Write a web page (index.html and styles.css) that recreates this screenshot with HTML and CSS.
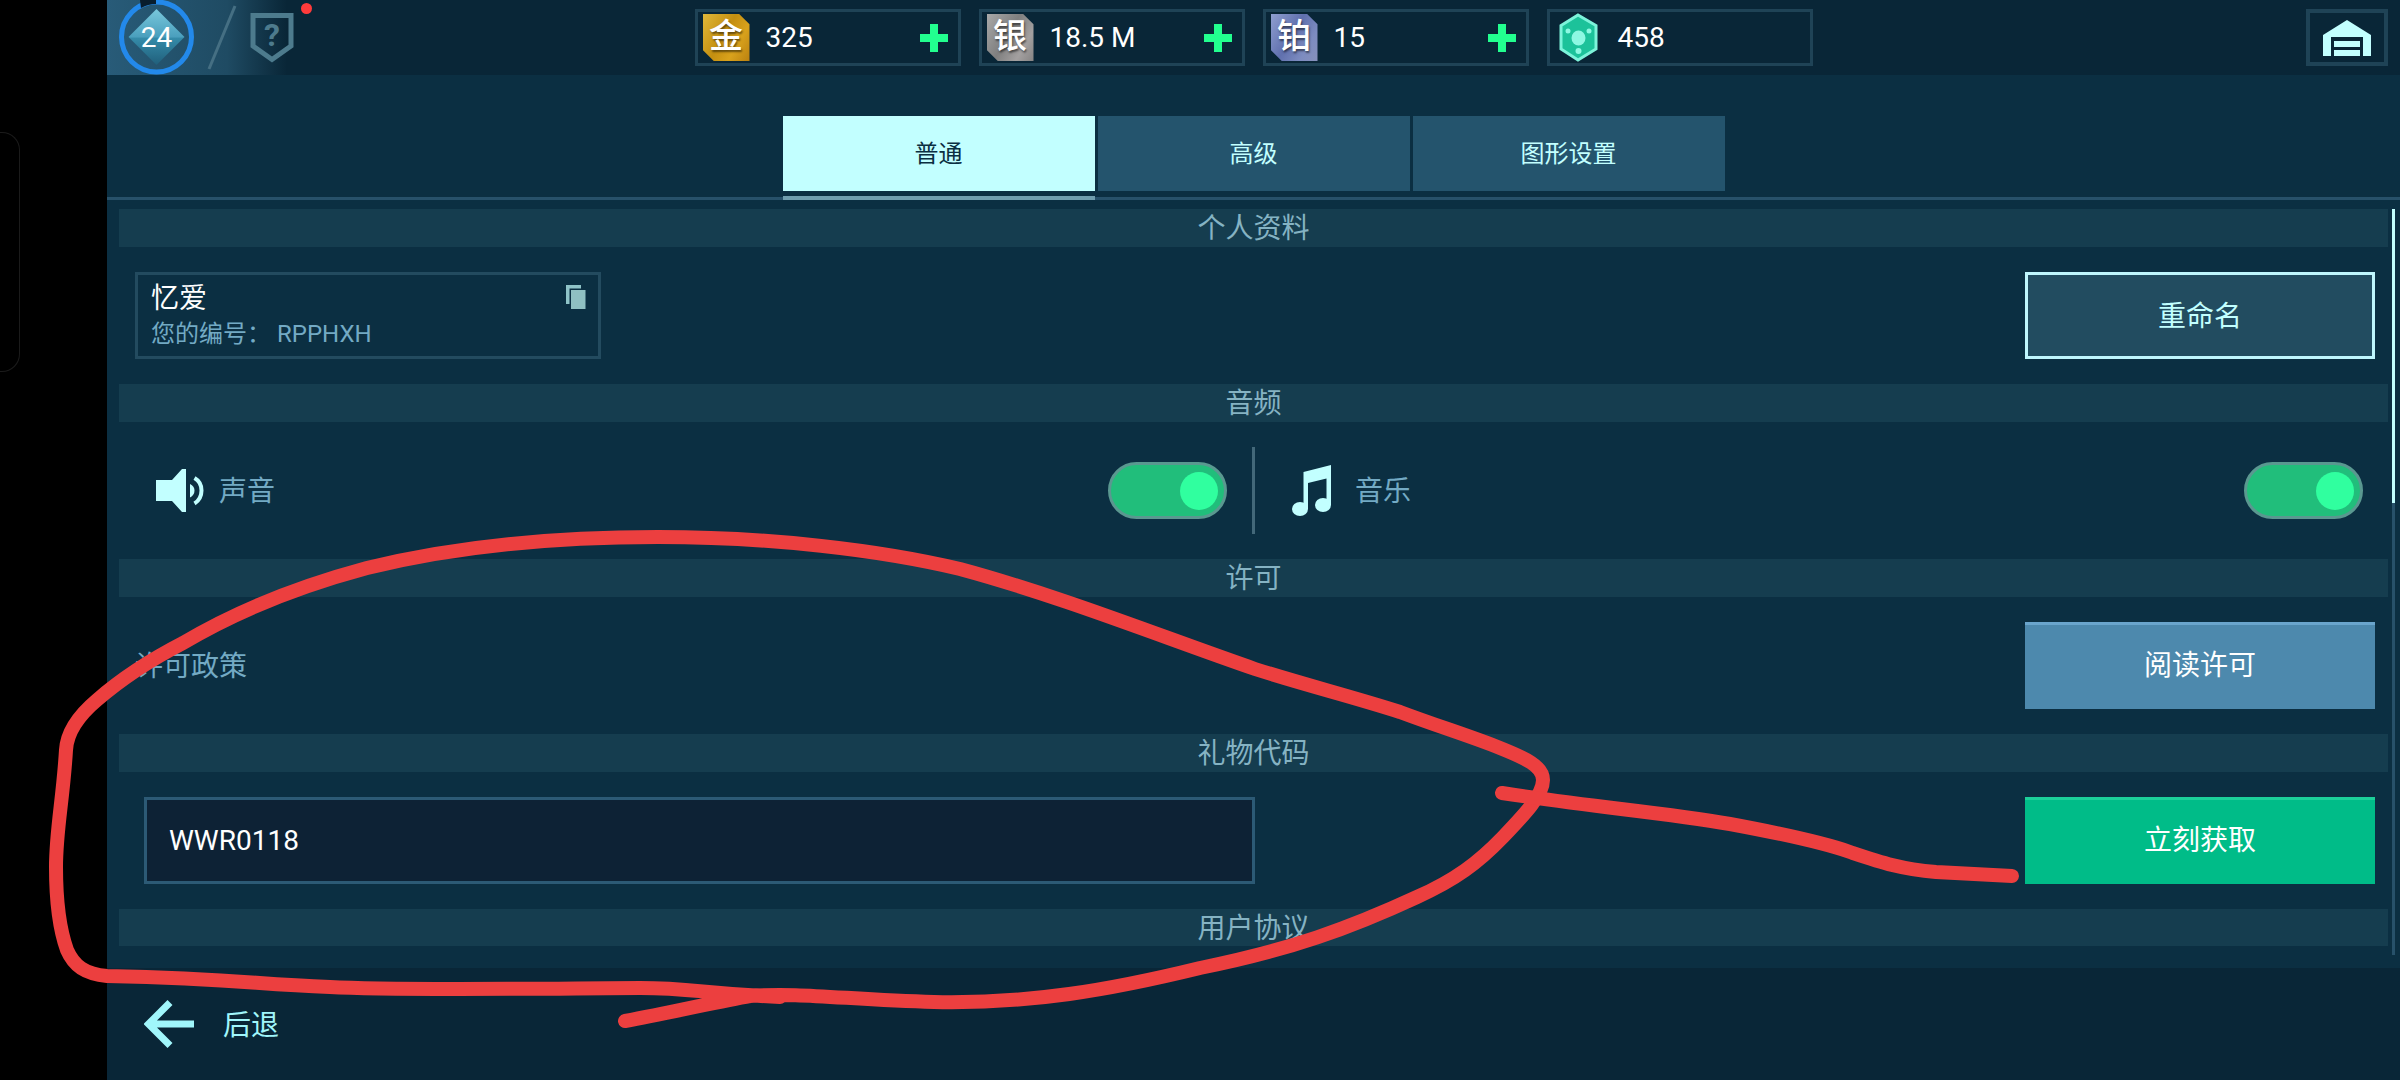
FILE: index.html
```html
<!DOCTYPE html>
<html lang="zh-CN">
<head>
<meta charset="utf-8">
<title>设置</title>
<meta name="viewport" content="width=device-width, initial-scale=1">
<link rel="stylesheet" href="styles.css">
</head>
<body>
<div class="screen">
  <aside class="bezel"><div class="bezel-outline"></div></aside>
  <div class="app">
    <header class="topbar">
      <div class="player">
        <div class="level">
          <svg viewBox="0 0 75 75" width="75" height="75" aria-hidden="true">
            <defs>
              <linearGradient id="gem" x1="0" y1="0" x2="0" y2="1">
                <stop offset="0" stop-color="#79c8dc"/>
                <stop offset="0.5" stop-color="#4a9fbd"/>
                <stop offset="0.52" stop-color="#358ba9"/>
                <stop offset="1" stop-color="#205f7b"/>
              </linearGradient>
            </defs>
            <path d="M37.500 9L65.500 37L37.500 65L9.500 37Z" fill="url(#gem)"/>
            <circle cx="37.500" cy="37" r="35" fill="none" stroke="#2389ea" stroke-width="5"/>
            <path d="M21 0H37V4Q29 4 22 8Z" fill="#081d2d"/>
          </svg>
          <span class="level-number">24</span>
        </div>
        <svg class="slash" viewBox="0 0 32 75" width="32" height="75" aria-hidden="true"><path d="M3 69L29 6" stroke="#456f83" stroke-width="3"/></svg>
        <div class="rank">
          <svg viewBox="0 0 44 50" width="44" height="50" aria-hidden="true"><path d="M3 2.500H41V33L22 46.500L3 33Z" fill="none" stroke="#4d7b8d" stroke-width="5"/></svg>
          <span class="rank-mark">?</span>
          <i class="dot"></i>
        </div>
      </div>
      <div class="wallet">
        <div class="coin"><span class="chip gold">金</span><span class="amount">325</span><button class="plus" type="button" aria-label="购买金币"></button></div>
        <div class="coin"><span class="chip silver">银</span><span class="amount">18.5 M</span><button class="plus" type="button" aria-label="购买银币"></button></div>
        <div class="coin"><span class="chip platinum">铂</span><span class="amount">15</span><button class="plus" type="button" aria-label="购买铂金"></button></div>
        <div class="coin">
          <svg class="key-gem" viewBox="0 0 47 52" width="47" height="52" aria-hidden="true">
            <path d="M23 3L41 13.500V37L23 48L6 37V13.500Z" fill="#1cc29a" stroke="#7df3da" stroke-width="3"/>
            <ellipse cx="23.500" cy="26" rx="7" ry="7.500" fill="#8df8e2"/>
            <circle cx="13" cy="19" r="2.500" fill="#8df8e2"/><circle cx="34" cy="19" r="2.500" fill="#8df8e2"/><circle cx="23.500" cy="39" r="3" fill="#8df8e2"/>
          </svg>
          <span class="amount">458</span>
        </div>
      </div>
      <button class="home" type="button" aria-label="机库">
        <svg viewBox="0 0 48 36" width="48" height="36" aria-hidden="true"><path fill="#c2ffff" d="M24 0L48 15V36H40V17H8V36H0V15ZM11 21H37V27H11ZM11 30H37V36H11Z"/></svg>
      </button>
    </header>

    <nav class="tabs">
      <button class="tab active" type="button">普通</button>
      <button class="tab" type="button">高级</button>
      <button class="tab" type="button">图形设置</button>
    </nav>

    <main class="panel">
      <div class="list">
        <h2 class="heading">个人资料</h2>
        <section class="row">
          <div class="profile">
            <div class="profile-text">
              <span class="name">忆爱</span>
              <span class="id"><span>您的编号：</span><span>RPPHXH</span></span>
            </div>
            <button class="copy" type="button" aria-label="复制编号">
              <svg viewBox="0 0 20 24" width="20" height="24" aria-hidden="true"><path fill="#8fc4c8" d="M0 0H15V3.500H3.500V19H0Z"/><path fill="#8fc0c2" d="M5 5H19.500V24H5Z"/></svg>
            </button>
          </div>
          <button class="action outline" type="button">重命名</button>
        </section>

        <h2 class="heading">音频</h2>
        <section class="row audio">
          <div class="switch-row">
            <label class="switch-label" for="sound">
              <span class="glyph"><svg viewBox="0 0 48 44" width="48" height="44" aria-hidden="true"><path fill="#c2ffff" d="M0 11H16L26 0H30V43H26L16 32H0ZM34 15Q38.500 17 38.500 21.500T34 28.500Z"/><path d="M38.500 9Q45.500 13 45.500 21.500T38.500 34.500" fill="none" stroke="#c2ffff" stroke-width="4"/></svg></span>
              <span class="label-text">声音</span>
            </label>
            <input class="toggle" id="sound" type="checkbox" checked>
          </div>
          <div class="switch-row">
            <label class="switch-label" for="music">
              <span class="glyph"><svg viewBox="0 0 40 52" width="40" height="52" aria-hidden="true"><g fill="#c2ffff"><path d="M11.500 7L39 0V40H34.500V13.500L16 18V44H11.500Z"/><ellipse cx="8" cy="44" rx="8" ry="7"/><ellipse cx="31" cy="40" rx="8" ry="7"/></g></svg></span>
              <span class="label-text">音乐</span>
            </label>
            <input class="toggle" id="music" type="checkbox" checked>
          </div>
        </section>

        <h2 class="heading">许可</h2>
        <section class="row">
          <span class="label-text">许可政策</span>
          <button class="action blue" type="button">阅读许可</button>
        </section>

        <h2 class="heading"><label for="code">礼物代码</label></h2>
        <section class="row gift">
          <input class="code" id="code" type="text" value="WWR0118">
          <button class="action green" type="button">立刻获取</button>
        </section>

        <h2 class="heading">用户协议</h2>
      </div>
      <div class="track"><div class="thumb"></div></div>
    </main>

    <footer class="bottom">
      <button class="back" type="button">
        <svg viewBox="0 0 50 48" width="50" height="48" aria-hidden="true"><path d="M50 24H5M26 2.500L4.500 24L26 45.500" fill="none" stroke="#a0f6fb" stroke-width="7"/></svg>
        <span class="back-text">后退</span>
      </button>
    </footer>
  </div>

  <!-- Hand-drawn marker strokes over the whole screen -->
  <svg class="marker" viewBox="0 0 2400 1080" aria-hidden="true">
    <path d="M780 997C700 993 690 988 640 988C580 988 400 991 330 987C250 984 240 979 107 976C85 974 74 966 67 950C58 925 56 890 56 867C56 830 63 800 66 750C67 733 78 716 97 700C120 680 150 660 183 643C235 612 300 586 367 568C460 545 560 537 658 537C770 537 880 550 960 569C1060 596 1165 638 1255 669C1305 685 1350 696 1400 712C1440 727 1470 736 1500 748C1525 758 1543 766 1543 780C1543 795 1525 814 1503 837C1478 863 1455 880 1417 897C1350 928 1290 950 1200 968C1110 990 1030 1004 934 1002C850 1000 800 992 750 996C720 1001 670 1013 625 1021"/>
    <path d="M1502 793C1600 808 1660 812 1730 824C1800 837 1830 845 1850 852C1880 862 1900 869 1936 872L2012 876"/>
  </svg>
</div>
</body>
</html>
```
FILE: styles.css
```css
* { box-sizing: border-box; }

body {
  margin: 0;
  background: #000;
  font-family: Roboto, "Noto Sans CJK SC", sans-serif;
  font-size: 28px;
  color: #fff;
}

button, input {
  margin: 0;
  padding: 0;
  border: 0;
  border-radius: 0;
  background: none;
  color: inherit;
  font: inherit;
}

svg { display: block; }

.screen {
  position: relative;
  display: grid;
  grid-template-columns: 107px 1fr;
  height: 100vh;
  overflow: hidden;
}

.bezel { padding-top: 132px; }

.bezel-outline {
  width: 20px;
  height: 240px;
  border: 1px solid #1b1b1b;
  border-left: 0;
  border-radius: 0 18px 18px 0;
}

.app {
  display: flex;
  flex-direction: column;
  min-width: 0;
  min-height: 0;
  background: #0b2f42;
}

/* Top bar */
.topbar {
  display: grid;
  grid-template-columns: 1fr auto 1fr;
  align-items: center;
  height: 75px;
  flex: none;
  padding-right: 12px;
  padding-left: 12px;
  background: linear-gradient(90deg, #285b78 0, #1f4b63 120px, #092637 180px);
}

.player { display: flex; align-items: center; }

.level, .rank { display: grid; place-items: center; }

.level > *, .rank > svg, .rank-mark { grid-area: 1 / 1; }

.level-number { line-height: 32px; }

.slash { margin-left: 12px; }

.rank { position: relative; margin-left: 12px; }

.rank-mark {
  padding-bottom: 6px;
  color: #4d7b8d;
  font-size: 32px;
  font-weight: 700;
  line-height: 32px;
}

.dot {
  position: absolute;
  top: -10px;
  right: -18px;
  width: 11px;
  height: 11px;
  border-radius: 50%;
  background: #ff3b3b;
}

.wallet { display: flex; gap: 18px; }

.coin {
  display: flex;
  align-items: center;
  width: 266px;
  height: 57px;
  padding: 0 10px 0 5px;
  border: 3px solid #1f4356;
}

.chip {
  width: 47px;
  height: 47px;
  clip-path: polygon(0 0, 78% 0, 100% 22%, 100% 100%, 24% 100%, 0 76%);
  font-size: 34px;
  font-weight: 500;
  line-height: 45px;
  text-align: center;
  text-shadow: 1px 2px 2px rgba(0, 0, 0, 0.5);
}

.gold { background: linear-gradient(120deg, #e0b83a, #c48f10 45%, #d9a21c 70%, #b98010); }
.silver { background: linear-gradient(120deg, #a9a9a9, #7f7f7f 45%, #a3a0a0 75%, #858383); }
.platinum { background: linear-gradient(120deg, #8f9fd0, #6070ae 45%, #7d8cc0 75%, #8791bb); }

.amount {
  flex: 1;
  padding-left: 16px;
  line-height: 32px;
}

.plus {
  width: 28px;
  height: 28px;
  background:
    linear-gradient(#22ff8f, #22ff8f) center / 8px 28px no-repeat,
    linear-gradient(#22ff8f, #22ff8f) center / 28px 8px no-repeat;
}

.home {
  display: grid;
  place-items: center;
  justify-self: end;
  width: 82px;
  height: 57px;
  border: 4px solid #1f4356;
}

/* Tabs */
.tabs {
  display: flex;
  justify-content: center;
  gap: 3px;
  flex: none;
  padding-top: 41px;
  padding-bottom: 6px;
  border-bottom: 3px solid #27516a;
}

.tab {
  position: relative;
  width: 312px;
  height: 75px;
  padding-bottom: 4px;
  background: #24546d;
  color: #c2ffff;
  font-size: 24px;
}

.tab.active { background: #c2ffff; color: #0b2f42; }

.tab.active::after {
  content: "";
  position: absolute;
  top: 80px;
  left: 0;
  width: 100%;
  height: 4px;
  background: #6f9dad;
}

/* Settings list */
.panel {
  display: grid;
  grid-template-columns: 1fr 3px;
  gap: 4px;
  flex: 1;
  min-height: 0;
  padding: 9px 5px 13px 12px;
}

.list {
  min-height: 0;
  margin-bottom: 9px;
  overflow: hidden;
}

.track { background: #27516a; }

.thumb { height: 294px; background: #c2ffff; }

.heading {
  height: 38px;
  margin: 0;
  background: #153d4f;
  color: #85b3c3;
  font-size: 28px;
  font-weight: 400;
  line-height: 40px;
  text-align: center;
}

.row {
  display: flex;
  align-items: center;
  justify-content: space-between;
  height: 137px;
  padding: 0 13px 0 16px;
}

.profile {
  display: flex;
  align-items: flex-start;
  justify-content: space-between;
  width: 466px;
  height: 87px;
  padding: 6px 12px 4px 13px;
  border: 3px solid #234b5f;
}

.profile-text { display: flex; flex-direction: column; }

.name { line-height: 36px; }

.id {
  display: flex;
  gap: 6px;
  color: #73aac4;
  font-size: 24px;
  line-height: 34px;
}

.copy { margin-top: 4px; }

.action {
  width: 350px;
  height: 87px;
  padding-bottom: 4px;
}

.outline { border: 3px solid #bff6fd; background: #224c60; color: #c2ffff; }
.blue { border-top: 3px solid #6aa5cc; background: #4d89ad; }
.green { border-top: 3px solid #1cd09a; background: #00bc88; }

.blue, .green { padding-bottom: 8px; }

.audio { padding: 0; }

.switch-row {
  display: flex;
  align-items: center;
  justify-content: space-between;
  flex: 1;
  height: 87px;
  padding: 0 25px 0 30px;
}

.switch-row:first-child {
  border-right: 3px solid #436879;
}

.switch-label {
  display: flex;
  align-items: center;
  gap: 10px;
}

.label-text { padding-bottom: 3px; color: #73aac4; }

.glyph { width: 60px; padding-left: 7px; }

.toggle {
  display: flex;
  align-items: center;
  justify-content: flex-end;
  width: 119px;
  height: 57px;
  padding-right: 6px;
  border: 3px solid #5a9890;
  border-radius: 29px;
  background: #21be7b;
  appearance: none;
}

.toggle::before {
  content: "";
  width: 38px;
  height: 38px;
  border-radius: 50%;
  background: #30ff9f;
}

.toggle:not(:checked) { justify-content: flex-start; padding-left: 6px; }

.gift { padding-left: 25px; }

.code {
  width: calc(50% - 5px);
  height: 87px;
  padding: 0 22px;
  border: 3px solid #2c5a75;
  background: #0d2235;
}

/* Footer */
.bottom {
  display: flex;
  align-items: center;
  flex: none;
  height: 112px;
  padding-left: 37px;
  background: #092637;
}

.back {
  display: flex;
  align-items: center;
  gap: 29px;
  color: #a0f6fb;
}

.back-text { padding-bottom: 3px; }

.marker {
  position: absolute;
  inset: 0;
  width: 100%;
  height: 100%;
  fill: none;
  stroke: #ec3f3f;
  stroke-width: 14px;
  stroke-linecap: round;
  stroke-linejoin: round;
  pointer-events: none;
}
```
